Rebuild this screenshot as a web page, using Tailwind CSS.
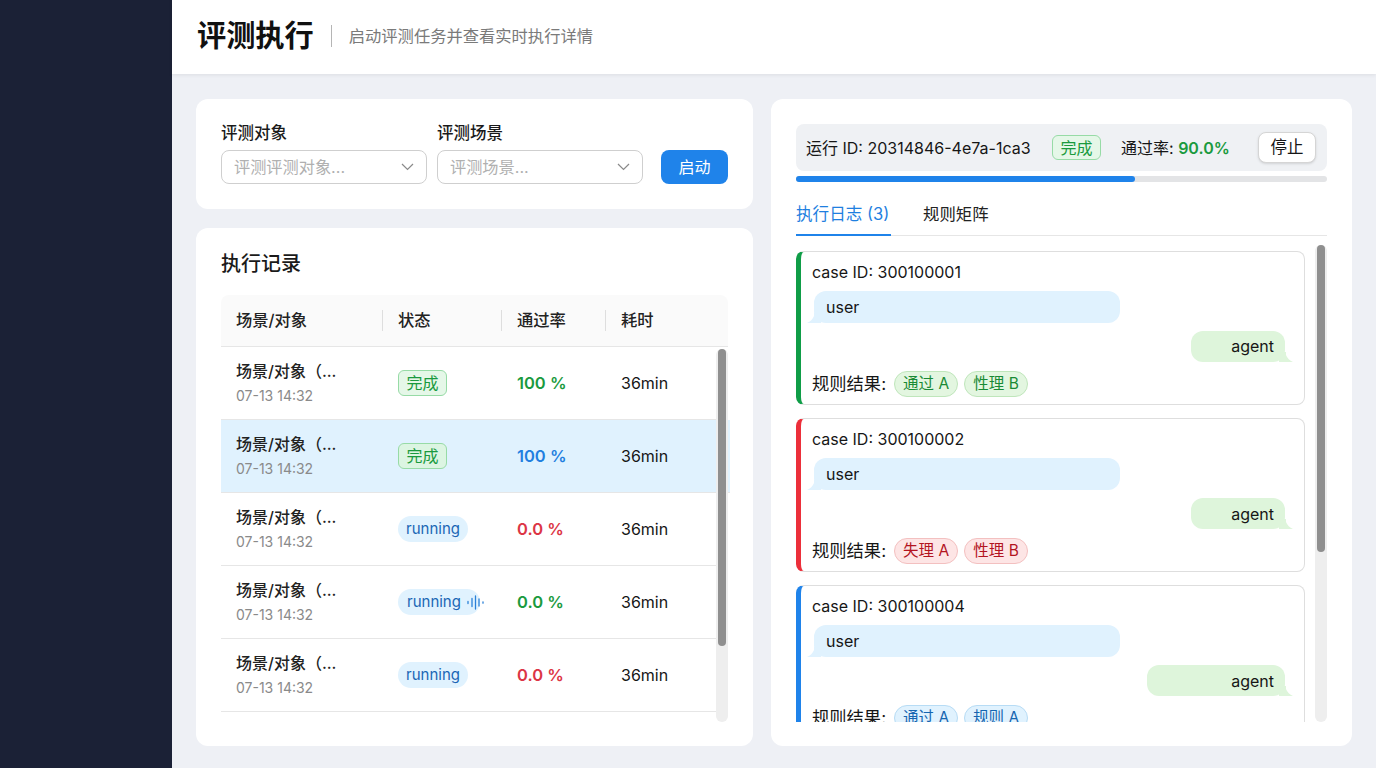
<!DOCTYPE html>
<html lang="zh-CN">
<head>
    <meta charset="UTF-8">
    <meta name="viewport" content="width=device-width, initial-scale=1.0">
    <title>评测执行</title>
    <script src="https://cdn.jsdelivr.net/npm/@tailwindcss/browser@4"></script>
</head>
<body class="h-[768px] overflow-hidden flex bg-[#eef0f5] text-[#161616] font-['Inter','Noto_Sans_CJK_SC',sans-serif]">
    <!-- sidebar -->
    <aside class="w-[172px] shrink-0 bg-[#1b2136]"></aside>

    <div class="flex-1 min-w-0 flex flex-col">
        <!-- header -->
        <header class="h-[74px] shrink-0 bg-white flex items-center pl-[25px] pb-[2px] shadow-[0_1px_4px_rgba(0,0,0,0.08)]">
            <h1 class="text-[29.2px] font-bold text-[#111] leading-none">评测执行</h1>
            <div class="w-px h-[22px] bg-[#b5b5b5] ml-[17px] mr-[17px]"></div>
            <p class="text-[16.3px] text-[#7a7a7a]">启动评测任务并查看实时执行详情</p>
        </header>

        <main class="flex-1 min-h-0 flex gap-[18px] pl-[24px] pr-[24px] pt-[25px] pb-[22px]">
            <!-- left column -->
            <div class="w-[557px] shrink-0 flex flex-col gap-[19px]">
                <section class="h-[110px] shrink-0 bg-white rounded-xl px-[25px] pt-[24px] flex items-end pb-[25px]">
                    <div class="w-[206px]">
                        <div class="text-[16.5px] leading-[20px] font-medium text-[#1a1a1a] mb-[7px]">评测对象</div>
                        <div class="h-[34px] rounded-lg border border-[#cfcfcf] flex items-center justify-between pl-[12px] pr-[12px] text-[16.2px] text-[#b0b0b0]">
                            <span>评测评测对象...</span>
                            <svg class="w-[13px] h-[8px]" viewBox="0 0 13 8" fill="none" stroke="#8a8a8a" stroke-width="1.2"><path d="M1 1l5.5 5.5L12 1"/></svg>
                        </div>
                    </div>
                    <div class="w-[206px] ml-[10px]">
                        <div class="text-[16.5px] leading-[20px] font-medium text-[#1a1a1a] mb-[7px]">评测场景</div>
                        <div class="h-[34px] rounded-lg border border-[#cfcfcf] flex items-center justify-between pl-[12px] pr-[12px] text-[16.2px] text-[#b0b0b0]">
                            <span>评测场景...</span>
                            <svg class="w-[13px] h-[8px]" viewBox="0 0 13 8" fill="none" stroke="#8a8a8a" stroke-width="1.2"><path d="M1 1l5.5 5.5L12 1"/></svg>
                        </div>
                    </div>
                    <button class="w-[67px] h-[34px] ml-[18px] rounded-lg bg-[#1f83ea] text-white text-[16px]">启动</button>
                </section>

                <section class="flex-1 min-h-0 bg-white rounded-xl px-[25px] pt-[22px] relative">
                    <h2 class="text-[20px] leading-[28px] font-medium text-[#1a1a1a] mb-[17px]">执行记录</h2>
                    <div class="grid grid-cols-[162px_119px_104px_122px] h-[52px] bg-[#fafafa] border-b border-[#e6e6e6] rounded-t-lg items-center text-[16.3px] font-medium text-[#222]">
                        <div class="pl-[15px] h-[21px] leading-[21px] border-r border-[#dedede]">场景/对象</div>
                        <div class="pl-[15px] h-[21px] leading-[21px] border-r border-[#dedede]">状态</div>
                        <div class="pl-[15px] h-[21px] leading-[21px] border-r border-[#dedede]">通过率</div>
                        <div class="pl-[15px] h-[21px] leading-[21px]">耗时</div>
                    </div>

                    <div class="grid grid-cols-[162px_119px_104px_122px] h-[73px] border-b border-[#e6e6e6] items-center">
                        <div class="pl-[15px]">
                            <div class="text-[16px] leading-[20px] font-medium text-[#222]">场景/对象（...</div>
                            <div class="text-[14px] leading-[20px] mt-[5px] text-[#8a8a8a]">07-13 14:32</div>
                        </div>
                        <div class="pl-[15px]"><span class="inline-flex items-center justify-center w-[49px] h-[26px] rounded-md bg-[#e5f7e8] border border-[#97dba6] text-[16px] text-[#1a9a3e]">完成</span></div>
                        <div class="pl-[15px] text-[16.5px] font-semibold text-[#1a9a3e]">100 %</div>
                        <div class="pl-[15px] text-[16px] text-[#161616]">36min</div>
                    </div>

                    <div class="grid grid-cols-[162px_119px_104px_122px] h-[73px] w-[509px] bg-[#e0f2fe] border-b border-[#e6e6e6] items-center">
                        <div class="pl-[15px]">
                            <div class="text-[16px] leading-[20px] font-medium text-[#222]">场景/对象（...</div>
                            <div class="text-[14px] leading-[20px] mt-[5px] text-[#8a8a8a]">07-13 14:32</div>
                        </div>
                        <div class="pl-[15px]"><span class="inline-flex items-center justify-center w-[49px] h-[26px] rounded-md bg-[#dcf5e2] border border-[#97dba6] text-[16px] text-[#1a9a3e]">完成</span></div>
                        <div class="pl-[15px] text-[16.5px] font-semibold text-[#1f7fe0]">100 %</div>
                        <div class="pl-[15px] text-[16px] text-[#161616]">36min</div>
                    </div>

                    <div class="grid grid-cols-[162px_119px_104px_122px] h-[73px] border-b border-[#e6e6e6] items-center">
                        <div class="pl-[15px]">
                            <div class="text-[16px] leading-[20px] font-medium text-[#222]">场景/对象（...</div>
                            <div class="text-[14px] leading-[20px] mt-[5px] text-[#8a8a8a]">07-13 14:32</div>
                        </div>
                        <div class="pl-[15px]"><span class="inline-flex items-center justify-center w-[70px] h-[26px] rounded-full bg-[#e0f2fe] text-[15px] text-[#1a66b5]">running</span></div>
                        <div class="pl-[15px] text-[16.5px] font-semibold text-[#dc3545]">0.0 %</div>
                        <div class="pl-[15px] text-[16px] text-[#161616]">36min</div>
                    </div>

                    <div class="grid grid-cols-[162px_119px_104px_122px] h-[73px] border-b border-[#e6e6e6] items-center">
                        <div class="pl-[15px]">
                            <div class="text-[16px] leading-[20px] font-medium text-[#222]">场景/对象（...</div>
                            <div class="text-[14px] leading-[20px] mt-[5px] text-[#8a8a8a]">07-13 14:32</div>
                        </div>
                        <div class="pl-[15px]">
                            <span class="inline-flex items-center w-[82px] h-[26px] pl-[9px] rounded-full bg-[#e0f2fe] text-[15px] text-[#1a66b5] whitespace-nowrap">running
                                <svg class="w-[17px] h-[15px] ml-[6px] shrink-0" viewBox="0 0 17 15" stroke="#2a80d8" stroke-width="1.3" stroke-linecap="round"><path d="M1 6.5v2M5 3.5v8M8.5 1v13M12 4v7M16 6.8v1.4"/></svg>
                            </span>
                        </div>
                        <div class="pl-[15px] text-[16.5px] font-semibold text-[#1a9a3e]">0.0 %</div>
                        <div class="pl-[15px] text-[16px] text-[#161616]">36min</div>
                    </div>

                    <div class="grid grid-cols-[162px_119px_104px_122px] h-[73px] border-b border-[#e6e6e6] items-center">
                        <div class="pl-[15px]">
                            <div class="text-[16px] leading-[20px] font-medium text-[#222]">场景/对象（...</div>
                            <div class="text-[14px] leading-[20px] mt-[5px] text-[#8a8a8a]">07-13 14:32</div>
                        </div>
                        <div class="pl-[15px]"><span class="inline-flex items-center justify-center w-[70px] h-[26px] rounded-full bg-[#e0f2fe] text-[15px] text-[#1a66b5]">running</span></div>
                        <div class="pl-[15px] text-[16.5px] font-semibold text-[#dc3545]">0.0 %</div>
                        <div class="pl-[15px] text-[16px] text-[#161616]">36min</div>
                    </div>

                    <!-- scrollbar -->
                    <div class="absolute left-[520px] top-[121px] w-[12px] h-[373px] rounded-full bg-[#eeeeee]">
                        <div class="mx-auto w-[8px] h-[297px] rounded-full bg-[#8f8f8f]"></div>
                    </div>
                </section>
            </div>

            <!-- right column -->
            <section class="flex-1 min-w-0 bg-white rounded-xl px-[25px] pt-[25px] pb-[25px] flex flex-col relative">
                <div class="h-[47px] shrink-0 rounded-lg bg-[#eff1f4] flex items-center pl-[10px] pr-[11px] text-[16px]">
                    <span class="w-[246px] whitespace-nowrap">运行 ID: 20314846-4e7a-1ca3</span>
                    <span class="inline-flex items-center justify-center w-[49px] h-[25px] rounded-md bg-[#e5f7e8] border border-[#97dba6] text-[16px] text-[#1a9a3e]">完成</span>
                    <span class="ml-[20px] whitespace-nowrap">通过率: <span class="font-semibold text-[#1a9a3e]">90.0%</span></span>
                    <button class="ml-auto w-[58px] h-[31px] rounded-lg bg-white border border-[#d5d5d5] shadow-sm text-[16.5px]">停止</button>
                </div>
                <div class="h-[6px] shrink-0 mt-[5px] rounded-full bg-[#e3e4e6]">
                    <div class="h-full w-[339px] rounded-full bg-[#1f83ea]"></div>
                </div>

                <div class="h-[54px] shrink-0 flex items-end border-b border-[#e6e6e6] text-[16.4px]">
                    <div class="w-[95px] h-[41px] flex items-center text-[#1f7fe0] text-[16.6px] border-b-2 border-[#1f83ea] -mb-px whitespace-nowrap">执行日志 (3)</div>
                    <div class="ml-[32px] h-[41px] flex items-center text-[#222]">规则矩阵</div>
                </div>

                <!-- case list -->
                <div class="mt-[15px] w-[509px] h-[471px] overflow-hidden flex flex-col gap-[13px] shrink-0">
                    <article class="h-[154px] shrink-0 rounded-lg border border-[#dedede] border-l-[5px] border-l-[#0f9d47] pl-[11px] pr-[11px] pt-[8px] text-[16px]">
                        <div class="leading-[24px]">case ID: 300100001</div>
                        <div class="relative w-[306px] h-[32px] ml-[2px] mt-[7px] rounded-xl bg-[#e0f2fe] flex items-center pl-[12px]">
                            <svg class="absolute -left-[7px] bottom-0 w-[14px] h-[10px]" viewBox="0 0 14 10" fill="#e0f2fe"><path d="M7 0v3q-2 5-7 7h14V0z"/></svg>
                            <span class="relative">user</span>
                        </div>
                        <div class="flex justify-end mt-[8px] pr-[8px]">
                            <div class="relative w-[94px] h-[31px] rounded-xl bg-[#def5db] flex items-center justify-end pr-[11px] pb-[2px]">
                                <svg class="absolute -right-[8px] bottom-0 w-[14px] h-[10px]" viewBox="0 0 14 10" fill="#def5db"><path d="M7 0v3q2 5 7 7H0V0z"/></svg>
                                <span class="relative">agent</span>
                            </div>
                        </div>
                        <div class="flex items-center mt-[9px]">
                            <span class="text-[17.3px]">规则结果:</span>
                            <span class="ml-[8px] inline-flex items-center justify-center w-[64px] h-[26px] rounded-full bg-[#e3f6e0] border border-[#bfe6bb] text-[15.5px] text-[#1a8a35] whitespace-nowrap">通过 A</span>
                            <span class="ml-[6px] inline-flex items-center justify-center w-[64px] h-[26px] rounded-full bg-[#e3f6e0] border border-[#bfe6bb] text-[15.5px] text-[#1a8a35] whitespace-nowrap">性理 B</span>
                        </div>
                    </article>

                    <article class="h-[154px] shrink-0 rounded-lg border border-[#dedede] border-l-[5px] border-l-[#ec2f3a] pl-[11px] pr-[11px] pt-[8px] text-[16px]">
                        <div class="leading-[24px]">case ID: 300100002</div>
                        <div class="relative w-[306px] h-[32px] ml-[2px] mt-[7px] rounded-xl bg-[#e0f2fe] flex items-center pl-[12px]">
                            <svg class="absolute -left-[7px] bottom-0 w-[14px] h-[10px]" viewBox="0 0 14 10" fill="#e0f2fe"><path d="M7 0v3q-2 5-7 7h14V0z"/></svg>
                            <span class="relative">user</span>
                        </div>
                        <div class="flex justify-end mt-[8px] pr-[8px]">
                            <div class="relative w-[94px] h-[31px] rounded-xl bg-[#def5db] flex items-center justify-end pr-[11px]">
                                <svg class="absolute -right-[8px] bottom-0 w-[14px] h-[10px]" viewBox="0 0 14 10" fill="#def5db"><path d="M7 0v3q2 5 7 7H0V0z"/></svg>
                                <span class="relative">agent</span>
                            </div>
                        </div>
                        <div class="flex items-center mt-[9px]">
                            <span class="text-[17.3px]">规则结果:</span>
                            <span class="ml-[8px] inline-flex items-center justify-center w-[64px] h-[26px] rounded-full bg-[#fde5e5] border border-[#f3c0c0] text-[15.5px] text-[#b3141f] whitespace-nowrap">失理 A</span>
                            <span class="ml-[6px] inline-flex items-center justify-center w-[64px] h-[26px] rounded-full bg-[#fde5e5] border border-[#f3c0c0] text-[15.5px] text-[#b3141f] whitespace-nowrap">性理 B</span>
                        </div>
                    </article>

                    <article class="h-[154px] shrink-0 rounded-lg border border-[#dedede] border-l-[5px] border-l-[#1f83ea] pl-[11px] pr-[11px] pt-[8px] text-[16px]">
                        <div class="leading-[24px]">case ID: 300100004</div>
                        <div class="relative w-[306px] h-[32px] ml-[2px] mt-[7px] rounded-xl bg-[#e0f2fe] flex items-center pl-[12px]">
                            <svg class="absolute -left-[7px] bottom-0 w-[14px] h-[10px]" viewBox="0 0 14 10" fill="#e0f2fe"><path d="M7 0v3q-2 5-7 7h14V0z"/></svg>
                            <span class="relative">user</span>
                        </div>
                        <div class="flex justify-end mt-[8px] pr-[8px]">
                            <div class="relative w-[138px] h-[31px] rounded-xl bg-[#def5db] flex items-center justify-end pr-[11px]">
                                <svg class="absolute -right-[8px] bottom-0 w-[14px] h-[10px]" viewBox="0 0 14 10" fill="#def5db"><path d="M7 0v3q2 5 7 7H0V0z"/></svg>
                                <span class="relative">agent</span>
                            </div>
                        </div>
                        <div class="flex items-center mt-[9px]">
                            <span class="text-[17.3px]">规则结果:</span>
                            <span class="ml-[8px] inline-flex items-center justify-center w-[64px] h-[26px] rounded-full bg-[#e0f2fe] border border-[#b7dcf5] text-[15.5px] text-[#1565b0] whitespace-nowrap">通过 A</span>
                            <span class="ml-[6px] inline-flex items-center justify-center w-[64px] h-[26px] rounded-full bg-[#e0f2fe] border border-[#b7dcf5] text-[15.5px] text-[#1565b0] whitespace-nowrap">规则 A</span>
                        </div>
                    </article>
                </div>

                <!-- scrollbar -->
                <div class="absolute left-[544px] top-[146px] w-[12px] h-[477px] rounded-full bg-[#eeeeee]">
                    <div class="mx-auto w-[8px] h-[307px] rounded-full bg-[#8f8f8f]"></div>
                </div>
            </section>
        </main>
    </div>
</body>
</html>
